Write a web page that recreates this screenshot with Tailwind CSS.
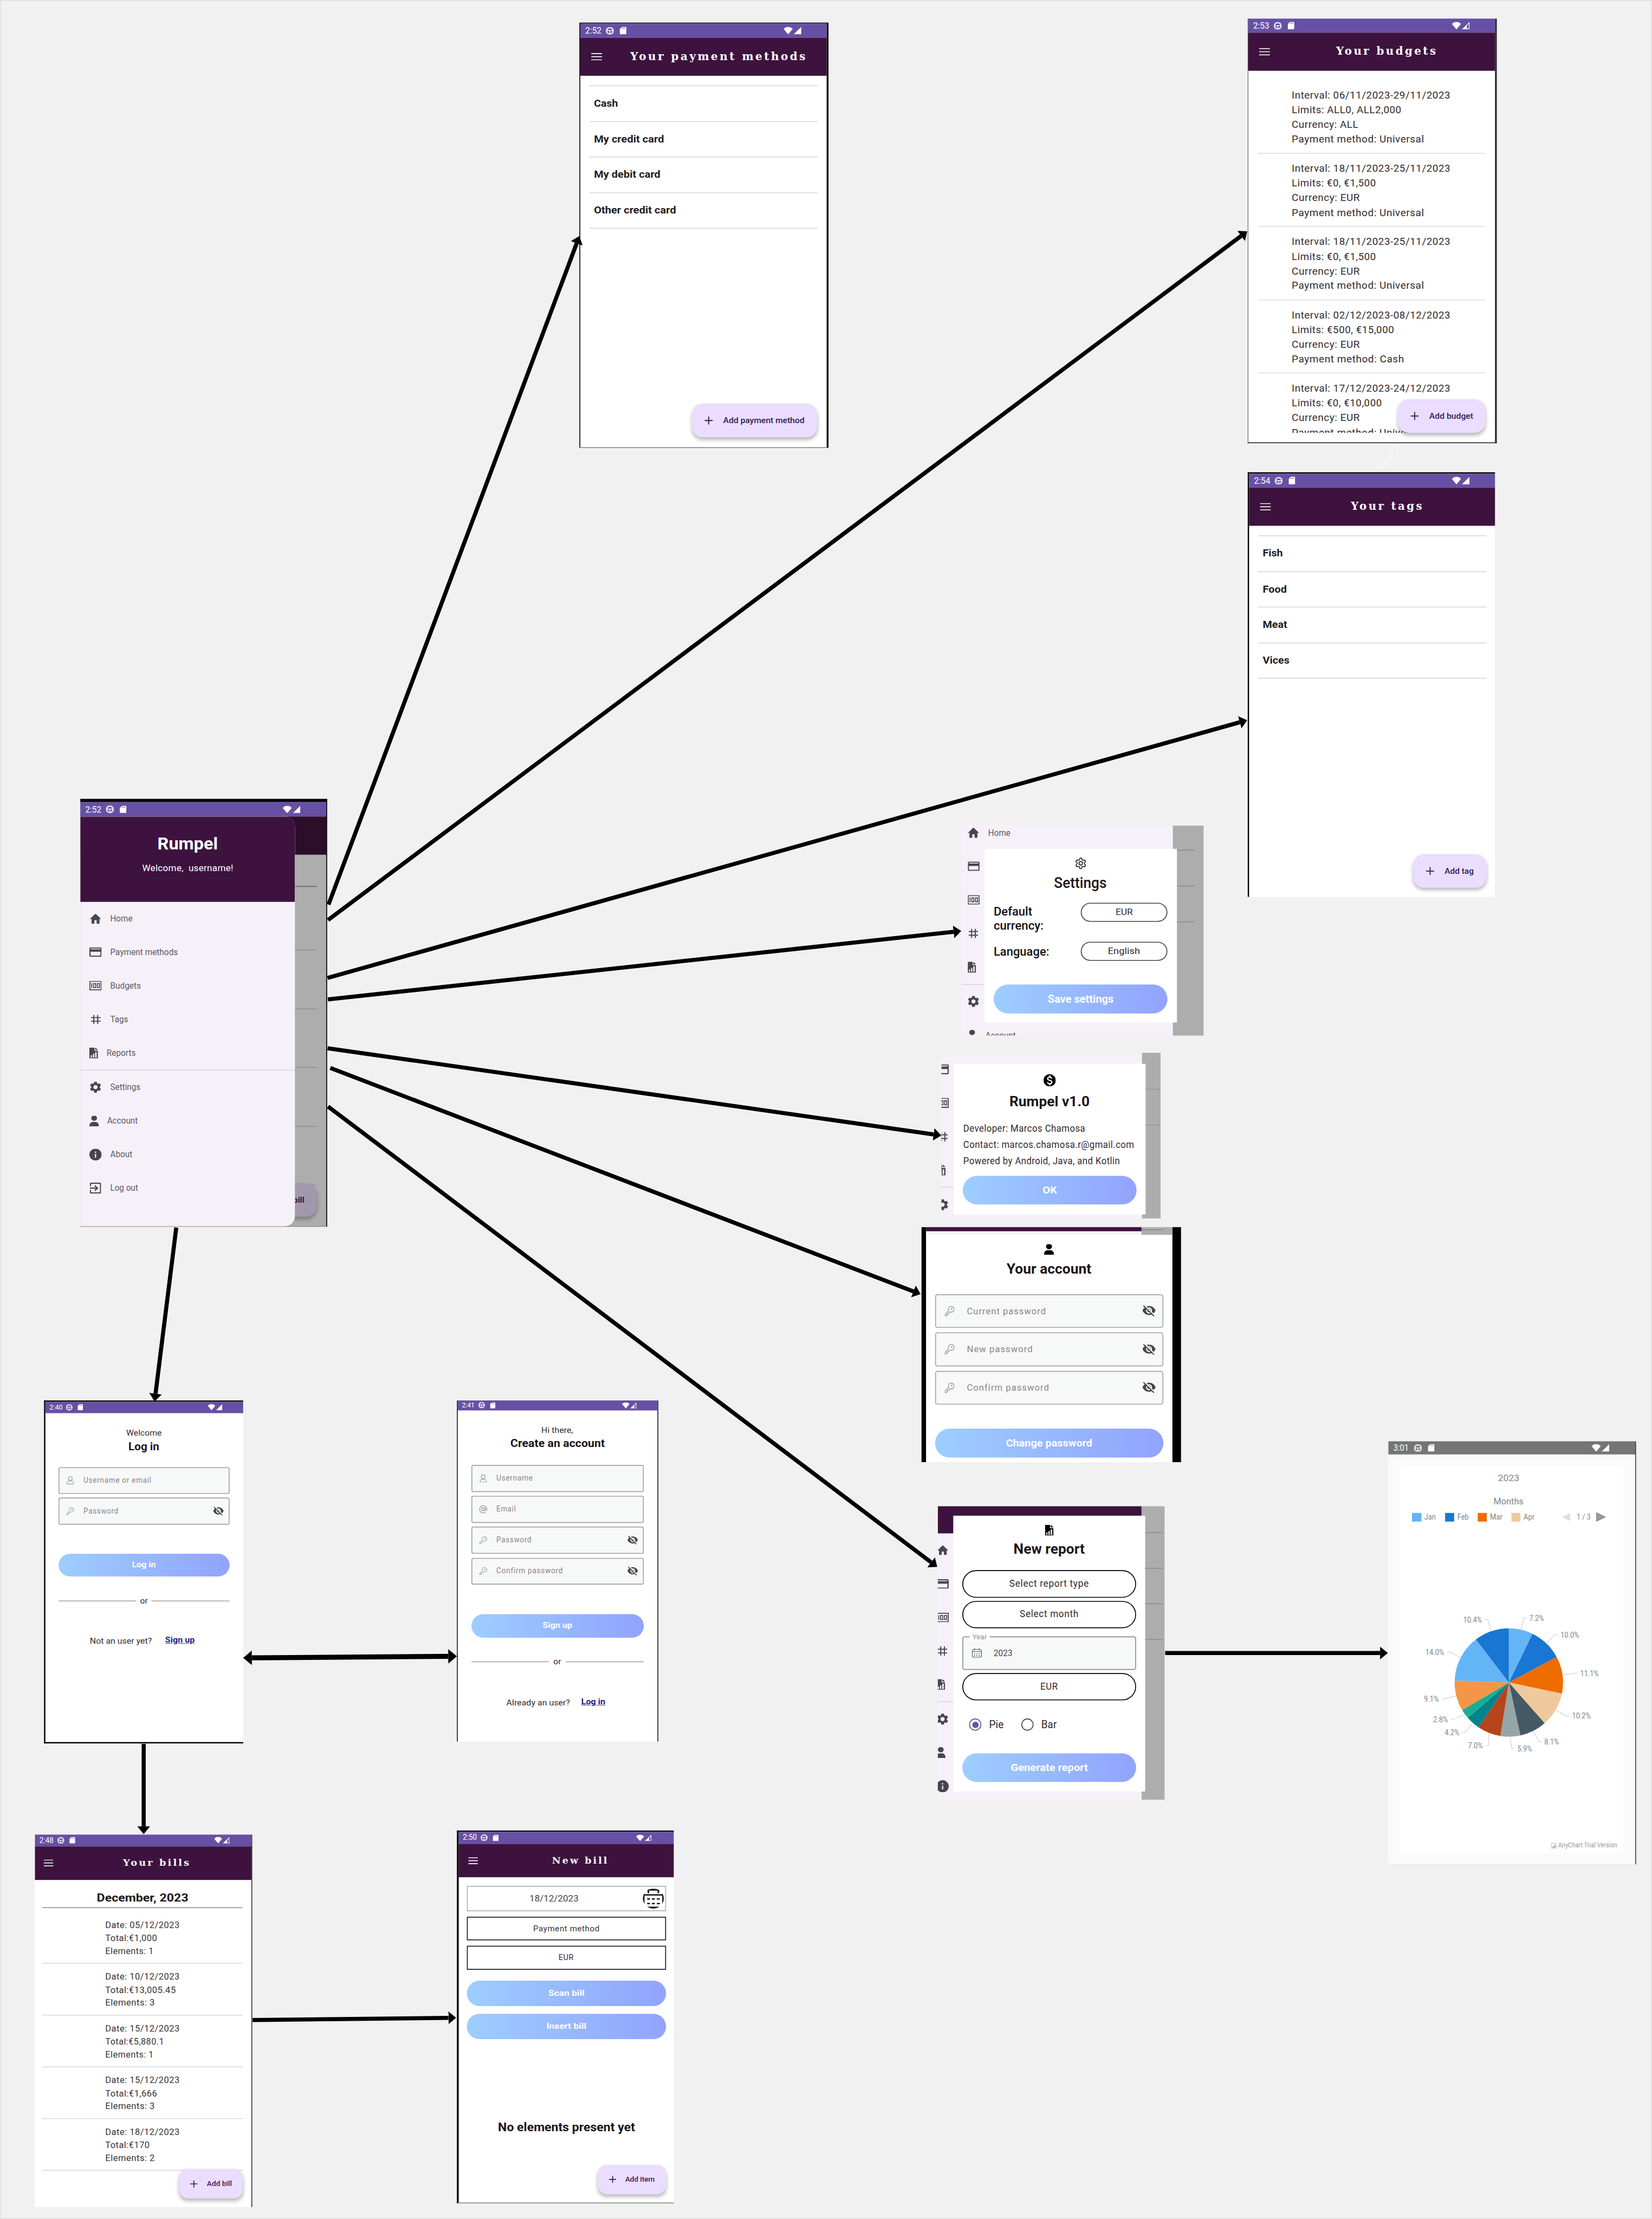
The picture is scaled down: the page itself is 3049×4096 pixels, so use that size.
<!DOCTYPE html>
<html lang="en">
<head>
<meta charset="utf-8">
<title>Rumpel screen flow</title>
<script src="https://cdn.jsdelivr.net/npm/@tailwindcss/browser@4"></script>
</head>
<body class="bg-[#f1f1f1] overflow-hidden">
<svg class="absolute size-0">
  <symbol id="home" viewBox="2 3 20 17" preserveAspectRatio="none"><path fill="currentColor" d="M10 20v-6h4v6h5v-8h3L12 3 2 12h3v8z"/></symbol>
  <symbol id="card" viewBox="2 4 20 16" preserveAspectRatio="none"><path fill="currentColor" d="M20 4H4c-1.11 0-1.99.89-1.99 2L2 18c0 1.11.89 2 2 2h16c1.11 0 2-.89 2-2V6c0-1.11-.89-2-2-2zm0 14H4v-6.500h16v6.500zm0-10.500H4V6h16v1.500z"/></symbol>
  <symbol id="money" viewBox="2 4 20 16" preserveAspectRatio="none"><path fill="currentColor" fill-rule="evenodd" d="M2 4h20v16H2zM3.600 5.600v12.800h16.800V5.600zM5 8h1.500v8H5zM8 8h5v8H8zm1.500 1.600v4.800h2V9.600zM14.300 8h5v8h-5zm1.500 1.600v4.800h2V9.600z"/></symbol>
  <symbol id="hash" viewBox="4 4 16 16" preserveAspectRatio="none"><path fill="currentColor" fill-rule="evenodd" d="M20 9.800V8h-4V4h-1.800v4h-4.400V4H8v4H4v1.800h4v4.400H4V16h4v4h1.800v-4h4.400v4H16v-4h4v-1.800h-4V9.800zm-5.800 4.400H9.800V9.800h4.400z"/></symbol>
  <symbol id="report" viewBox="0 0 18 24" preserveAspectRatio="none"><path fill="currentColor" fill-rule="evenodd" d="M1 0h9.800v7.500H18V23a1 1 0 0 1-1 1H1a1 1 0 0 1-1-1V1a1 1 0 0 1 1-1zM2.700 17v5h2.600v-5zM7.300 14v8h2.800v-8zM12 10.500V22h3.200V10.500zM12.200 0 18 5.600h-5.800z"/></symbol>
  <symbol id="gear" viewBox="2.200 2 19.600 20" preserveAspectRatio="none"><path fill="currentColor" d="M19.140 12.940c.04-.3.06-.61.06-.94 0-.32-.02-.64-.07-.94l2.030-1.580c.18-.14.23-.41.12-.61l-1.920-3.320c-.12-.22-.37-.29-.59-.22l-2.390.96c-.5-.38-1.030-.7-1.620-.94l-.36-2.540c-.04-.24-.24-.41-.48-.41h-3.840c-.24 0-.43.17-.47.41l-.36 2.540c-.59.24-1.130.57-1.620.94l-2.390-.96c-.22-.08-.47 0-.59.22L2.740 8.870c-.12.21-.08.47.12.61l2.030 1.580c-.05.3-.09.63-.09.94s.02.64.07.94l-2.030 1.580c-.18.14-.23.41-.12.61l1.920 3.320c.12.22.37.29.59.22l2.390-.96c.5.38 1.030.7 1.620.94l.36 2.540c.05.24.24.41.48.41h3.840c.24 0 .44-.17.47-.41l.36-2.540c.59-.24 1.130-.56 1.620-.94l2.390.96c.22.08.47 0 .59-.22l1.920-3.320c.12-.22.07-.47-.12-.61l-2.010-1.580zM12 15.600c-1.980 0-3.600-1.620-3.600-3.600s1.620-3.600 3.600-3.600 3.600 1.620 3.600 3.600-1.620 3.600-3.600 3.600z"/></symbol>
  <symbol id="cog" viewBox="1.500 1 21 22" preserveAspectRatio="none"><g fill="none" stroke="currentColor" stroke-width="1.700"><path d="M12.220 2h-.44a2 2 0 0 0-2 2v.18a2 2 0 0 1-1 1.730l-.43.25a2 2 0 0 1-2 0l-.15-.08a2 2 0 0 0-2.730.73l-.22.38a2 2 0 0 0 .73 2.730l.15.1a2 2 0 0 1 1 1.720v.51a2 2 0 0 1-1 1.740l-.15.09a2 2 0 0 0-.73 2.730l.22.38a2 2 0 0 0 2.730.73l.15-.08a2 2 0 0 1 2 0l.43.25a2 2 0 0 1 1 1.730V20a2 2 0 0 0 2 2h.44a2 2 0 0 0 2-2v-.18a2 2 0 0 1 1-1.730l.43-.25a2 2 0 0 1 2 0l.15.08a2 2 0 0 0 2.730-.73l.22-.39a2 2 0 0 0-.73-2.730l-.15-.08a2 2 0 0 1-1-1.740v-.5a2 2 0 0 1 1-1.740l.15-.09a2 2 0 0 0 .73-2.730l-.22-.38a2 2 0 0 0-2.730-.73l-.15.08a2 2 0 0 1-2 0l-.43-.25a2 2 0 0 1-1-1.730V4a2 2 0 0 0-2-2z"/><circle cx="12" cy="12" r="3.300"/></g></symbol>
  <symbol id="person" viewBox="0 0 20 24" preserveAspectRatio="none"><path fill="currentColor" d="M10 0a6 5.800 0 0 1 0 11.800A6 5.800 0 0 1 10 0zM0 23c0-6 3.500-9 7.500-9h5c4 0 7.500 3 7.500 9 0 .6-.4 1-1 1H1c-.6 0-1-.4-1-1z"/></symbol>
  <symbol id="user" viewBox="0 0 20 24" preserveAspectRatio="none"><path fill="none" stroke="currentColor" stroke-width="1.600" d="M10 1a5.300 5.600 0 0 1 0 11.200A5.300 5.600 0 0 1 10 1zM1 21.500c0-4 2.600-7.500 6-7.500 1 .8 5 .8 6 0 3.400 0 6 3.500 6 7.500 0 .9-.6 1.500-1.400 1.500H2.400C1.600 23 1 22.400 1 21.500z"/></symbol>
  <symbol id="info" viewBox="2 2 20 20" preserveAspectRatio="none"><path fill="currentColor" d="M12 2C6.480 2 2 6.480 2 12s4.480 10 10 10 10-4.480 10-10S17.520 2 12 2zm1 15h-2v-6h2v6zm0-8h-2V7h2v2z"/></symbol>
  <symbol id="exit" viewBox="3 3 18 18" preserveAspectRatio="none"><path fill="currentColor" d="M10.090 15.590L11.500 17l5-5-5-5-1.410 1.410L12.670 11H3v2h9.670l-2.580 2.590zM19 3H5c-1.110 0-2 .9-2 2v4h2V5h14v14H5v-4H3v4c0 1.100.89 2 2 2h14c1.100 0 2-.9 2-2V5c0-1.100-.9-2-2-2z"/></symbol>
  <symbol id="dollar" viewBox="2 2 20 20" preserveAspectRatio="none"><path fill="currentColor" d="M12 2C6.480 2 2 6.480 2 12s4.480 10 10 10 10-4.480 10-10S17.520 2 12 2zm1.410 16.090V20h-2.670v-1.930c-1.710-.36-3.160-1.460-3.270-3.400h1.960c.1 1.050.82 1.870 2.650 1.870 1.960 0 2.400-.98 2.400-1.590 0-.83-.44-1.610-2.670-2.140-2.480-.6-4.180-1.620-4.180-3.670 0-1.720 1.390-2.840 3.110-3.210V4h2.670v1.950c1.860.45 2.790 1.860 2.850 3.390H14.300c-.05-1.110-.64-1.870-2.220-1.870-1.500 0-2.400.68-2.400 1.640 0 .84.65 1.390 2.670 1.910s4.180 1.390 4.180 3.910c-.01 1.830-1.380 2.830-3.120 3.160z"/></symbol>
  <symbol id="key" viewBox="0 0 24 24" preserveAspectRatio="none"><path fill="none" stroke="currentColor" stroke-width="1.500" stroke-linejoin="round" d="M15.500 1.500c4 0 7.500 2.500 7.500 6.200s-3.200 6.800-7.200 6.800c-1.200 0-2-.2-3-.6l-2.300 2.600H8.300v2.300H6v2.300l-1.600 1.400H1v-3.200l8.700-8.500c-.4-1-.6-2-.6-3 0-3.500 2.800-6.300 6.400-6.300z"/><circle cx="17" cy="7" r="1.600" fill="currentColor"/></symbol>
  <symbol id="eye" viewBox="1 3 22 19" preserveAspectRatio="none"><path fill="currentColor" d="M12 7c2.760 0 5 2.240 5 5 0 .65-.13 1.260-.36 1.830l2.920 2.920c1.510-1.260 2.700-2.890 3.430-4.750-1.730-4.390-6-7.500-11-7.500-1.400 0-2.740.25-3.980.7l2.160 2.160C10.740 7.130 11.350 7 12 7zM2 4.270l2.280 2.280.46.46C3.080 8.300 1.780 10.020 1 12c1.730 4.390 6 7.500 11 7.500 1.550 0 3.030-.3 4.380-.84l.42.42L19.730 22 21 20.730 3.270 3 2 4.270zM7.530 9.800l1.550 1.550c-.05.21-.08.43-.08.65 0 1.660 1.340 3 3 3 .22 0 .44-.03.65-.08l1.550 1.550c-.67.33-1.410.53-2.200.53-2.760 0-5-2.240-5-5 0-.79.2-1.530.53-2.200zm4.310-.78l3.150 3.150.02-.16c0-1.660-1.340-3-3-3l-.17.01z"/></symbol>
  <symbol id="at" viewBox="1 1 22 22" preserveAspectRatio="none"><g fill="none" stroke="currentColor" stroke-width="1.700"><circle cx="12" cy="12" r="4.300"/><path d="M16.300 8v5a3 3 0 0 0 5.700 0v-1a10 10 0 1 0-4 8"/></g></symbol>
  <symbol id="cal" viewBox="0 0 24 24" preserveAspectRatio="none"><g fill="none" stroke="currentColor" stroke-width="1.600"><rect x="1" y="3" width="22" height="20" rx="4"/><path d="M1 8.500h22M6.500 0v5M17.500 0v5"/><path stroke-dasharray="3 2.500" d="M5 14h15M5 18.500h15"/></g></symbol>
  <clipPath id="disc"><ellipse cx="23" cy="22" rx="23" ry="22"/></clipPath>
  <symbol id="calbig" viewBox="0 0 46 44" preserveAspectRatio="none"><g clip-path="url(#disc)" fill="none" stroke="currentColor"><rect x="1.500" y="2.500" width="43" height="39.500" rx="6" stroke-width="4"/><path stroke-width="3" d="M0 14h46"/><path stroke-width="3.500" d="M12 0v10M34 0v10"/><path stroke-width="3" stroke-linecap="round" d="M10.500 23h4M21 23h4M32 23h4M10.500 33h4M21 33h4M32 33h4"/></g></symbol>
  <symbol id="snap" viewBox="0 0 20 20" preserveAspectRatio="none"><g fill="none" stroke="currentColor"><circle cx="10" cy="10" r="9" stroke-width="2" stroke-dasharray="1.700 1.130"/><circle cx="10" cy="10" r="7.200" stroke-width="1.900"/><path stroke-width="1.800" d="M3 9.500h14M10 10v7"/></g></symbol>
  <symbol id="sd" viewBox="4 2 16 20" preserveAspectRatio="none"><path fill="currentColor" fill-rule="evenodd" d="M18 2h-8L4 8v12c0 1.100.9 2 2 2h12c1.100 0 2-.9 2-2V4c0-1.100-.9-2-2-2zM9.500 4.500v3h1.500v-3zm3 0v3H14v-3zm3 0v3H17v-3z"/></symbol>
  <symbol id="wifi" viewBox="0 0 20 17" preserveAspectRatio="none"><path fill="currentColor" d="M10 17 0 4.800C6 -1.600 14 -1.600 20 4.800z"/></symbol>
  <symbol id="sig" viewBox="0 0 20 20" preserveAspectRatio="none"><path fill="currentColor" d="M0 20 20 0v20z"/></symbol>
  <symbol id="sighollow" viewBox="0 0 20 20" preserveAspectRatio="none"><path fill="currentColor" fill-rule="evenodd" d="M0 20 20 0v20zM13 9.500V18h4.800V5z"/></symbol>
  <symbol id="plus" viewBox="0 0 18 18" preserveAspectRatio="none"><path fill="currentColor" d="M7.900 0h2.200v7.900H18v2.200h-7.900V18H7.900v-7.900H0V7.900h7.900z"/></symbol>
  <symbol id="menu" viewBox="0 0 24 16" preserveAspectRatio="none"><path fill="currentColor" d="M0 0h24v2H0zM0 7h24v2H0zM0 14h24v2H0z"/></symbol>
</svg>

<div class="w-[3049px] h-[4096px] overflow-hidden">
  <main id="board" class="relative w-[3641px] h-[4891px] origin-top-left scale-[0.8374] bg-[#f1f1f1] outline-2 -outline-offset-2 outline-[#e0e0e0] font-['Roboto',sans-serif] text-[#1d1b20] leading-none"></main>
</div>

<script>
// Text run fitted to a fixed width.
const T = (s, w, c = '', o = 'origin-left') => `<span data-w="${w}" class="inline-block whitespace-pre ${c} ${o}">${s}</span>`;
const C = (s, w, c = '') => T(s, w, c, 'origin-center');
const I = (n, c) => `<svg class="shrink-0 ${c}"><use href="#${n}"/></svg>`;

const status = (time, w, c, sig = 'sig') => `
  <div class="flex items-center shrink-0 text-white pl-[.6em] pr-[2.95em] ${c}">
    ${T(time, w)}${I('snap', 'ml-[.42em] w-[.97em] h-[.94em]')}${I('sd', 'ml-[.68em] w-[.77em] h-[.88em]')}
    ${I('wifi', 'ml-auto w-[1.06em] h-[.88em]')}${I(sig, 'ml-[.1em] w-[.9em] h-[.88em]')}
  </div>`;
const bar = (title, w, c = 'h-[84px] pl-[24px]', t = 'text-[23.5px] tracking-[4px]', m = 'w-[24px] h-[16px]') => `
  <div class="flex items-center shrink-0 bg-[#3d123e] text-white ${c}">
    ${I('menu', m)}<div class="flex-1 text-center pl-[20px] font-bold font-['DejaVu_Serif',serif] ${t}">${C(title, w + 4)}</div>
  </div>`;
const fab = (label, w, c, t = 'text-[18.5px] h-[74px] pl-[28px] rounded-[24px]', i = 'w-[18px] h-[18px] mr-[23px]') => `
  <div class="absolute flex items-center bg-[#eaddff] text-[#331a54] font-medium shadow-[0_5px_9px_rgba(0,0,0,.28)] ${t} ${c}">
    ${I('plus', i)}${T(label, w)}</div>`;
const cta = (label, w, c) => `<div class="flex items-center justify-center shrink-0 rounded-full bg-linear-to-r/srgb from-[#9dceff] to-[#92a3fd] text-white font-bold ${c}">${C(label, w)}</div>`;
const field = (icon, label, w, eye, c, ic, ec) => `
  <div class="flex items-center shrink-0 bg-[#f7f9f8] border-2 border-[#a5a2aa] text-[#8d8389] ${c}">
    ${I(icon, ic)}${T(label, w)}${eye ? I('eye', 'ml-auto text-[#49454f] ' + ec) : ''}</div>`;
const sideRow = (icon, c) => `<div class="flex items-center h-[74px] shrink-0">${I(icon, c)}</div>`;

const listRows = rows => rows.map(([s, w]) => `<div class="flex items-center h-[78.5px] border-b-2 border-[#d9d8dd] pl-[10px] text-[22px] font-bold">${T(s, w)}</div>`).join('');

const payments = `
<section class="absolute left-[1277px] top-[50px] w-[549px] h-[937px] flex flex-col bg-white border-l-2 border-r-4 border-t-2 border-b border-black">
  ${status('2:52', 35.5, 'h-[31px] bg-[#6750a4] text-[19px]')}
  ${bar('Your payment methods', 386)}
  <div class="mt-[21px] mx-[20px] border-t-2 border-[#d9d8dd]">
    ${listRows([['Cash', 53], ['My credit card', 154.6], ['My debit card', 146.5], ['Other credit card', 181]])}
  </div>
  ${fab('Add payment method', 179, 'right-[21px] bottom-[22px] w-[276px]')}
</section>`;

const budgetRow = r => `<div class="flex flex-col h-[161.6px] shrink-0 border-b-2 border-[#e0e0e4] pl-[75px] pt-[17px] text-[22px] leading-[32.4px] tracking-[.6px] text-[#322b2f]">
  ${r.map(([s, w]) => `<div>${T(s, w)}</div>`).join('')}</div>`;
const budgets = `
<section class="absolute left-[2750px] top-[41px] w-[549px] h-[936px] flex flex-col bg-white border-l border-r-4 border-b-2 border-[#2a2a2a]">
  ${status('2:53', 35.5, 'h-[31px] bg-[#6750a4] text-[19px]', 'sighollow')}
  ${bar('Your budgets', 220)}
  <div class="mx-[21px] pt-[21px] h-[798px] overflow-hidden">
    ${budgetRow([['Interval: 06/11/2023-29/11/2023', 350], ['Limits: ALL0, ALL2,000', 242], ['Currency: ALL', 147], ['Payment method: Universal', 292]])}
    ${budgetRow([['Interval: 18/11/2023-25/11/2023', 350], ['Limits: €0, €1,500', 186], ['Currency: EUR', 150.5], ['Payment method: Universal', 292]])}
    ${budgetRow([['Interval: 18/11/2023-25/11/2023', 350], ['Limits: €0, €1,500', 186], ['Currency: EUR', 150.5], ['Payment method: Universal', 292]])}
    ${budgetRow([['Interval: 02/12/2023-08/12/2023', 350], ['Limits: €500, €15,000', 226], ['Currency: EUR', 150.5], ['Payment method: Cash', 248]])}
    ${budgetRow([['Interval: 17/12/2023-24/12/2023', 350], ['Limits: €0, €10,000', 199], ['Currency: EUR', 150.5], ['Payment method: Universal', 292]])}
  </div>
  ${fab('Add budget', 97, 'right-[21px] bottom-[21px] w-[193px]')}
</section>`;

const tags = `
<section class="absolute left-[2750px] top-[1041px] w-[545px] h-[936px] flex flex-col bg-white border-l-3 border-t-3 border-black">
  ${status('2:54', 35.5, 'h-[31px] bg-[#6750a4] text-[19px]')}
  ${bar('Your tags', 157)}
  <div class="mt-[21px] ml-[20px] mr-[19px] border-t-2 border-[#d9d8dd]">
    ${listRows([['Fish', 44.4], ['Food', 53], ['Meat', 54], ['Vices', 59]])}
  </div>
  ${fab('Add tag', 64, 'right-[19px] bottom-[20px] w-[161px]')}
</section>`;

const item = (icon, label, w, ic) => `<div class="flex items-center h-[74px] shrink-0 text-[#5d5963] text-[19px]">
  ${I(icon, 'text-[#49454f] ' + ic)}${T(label, w)}</div>`;
const drawer = `
<section class="absolute left-[177px] top-[1761px] w-[543.500px] h-[943px] flex flex-col bg-[#adadad] border-r-2 border-t-7 border-b border-black border-b-[#777]">
  ${status('2:52', 35.5, 'h-[32px] bg-[#6750a4] text-[19px]')}
  <div class="h-[84px] shrink-0 bg-[#2c0d2a]"></div>
  <div class="ml-[440px] mr-[21px] flex flex-col text-[#919096]">
    <div class="h-[71px] border-b-2 border-[#686464]"></div>
    <div class="h-[140px] border-b-2"></div><div class="h-[129.500px] border-b-2"></div>
    <div class="h-[129.500px] border-b-2"></div><div class="h-[129.500px] border-b-2"></div><div class="h-[129.500px] border-b-2"></div>
  </div>
  <div class="absolute right-[21px] bottom-[21px] h-[74px] w-[161px] pl-[70px] rounded-[24px] flex items-center bg-[#a197ae] text-[#2c1a44] text-[18.5px] font-bold shadow-[0_5px_9px_rgba(0,0,0,.28)]">${T('Add bill', 64)}</div>
  <div class="absolute left-0 top-[32px] bottom-0 w-[473px] rounded-r-[22px] overflow-hidden bg-[#f6f1f9] flex flex-col">
    <div class="h-[187.500px] shrink-0 bg-[#3d123e] text-white flex flex-col items-center">
      <div class="mt-[42px] text-[37px] font-bold">${C('Rumpel', 133)}</div>
      <div class="mt-[25px] text-[19.5px] tracking-[.3px]">${C('Welcome,&nbsp; username!', 201)}</div>
    </div>
    <div class="flex flex-col pl-[20px]">
      ${item('home', 'Home', 49, 'w-[25px] h-[22px] ml-[1px] mr-[20px]')}
      ${item('card', 'Payment methods', 149, 'w-[27px] h-[21px] mr-[19px]')}
      ${item('money', 'Budgets', 67.4, 'w-[27px] h-[21px] mr-[19px]')}
      ${item('hash', 'Tags', 39.4, 'w-[22px] h-[20px] ml-[3px] mr-[21px]')}
      ${item('report', 'Reports', 64, 'w-[19px] h-[24px] mr-[19px]')}
    </div>
    <div class="h-[2px] shrink-0 bg-[#dbd5de]"></div>
    <div class="flex flex-col pl-[20px]">
      ${item('gear', 'Settings', 66.6, 'w-[25px] h-[25px] ml-[1px] mr-[20px]')}
      ${item('person', 'Account', 67.7, 'w-[21px] h-[24px] mr-[18px]')}
      ${item('info', 'About', 48.6, 'w-[27px] h-[26px] mr-[19px]')}
      ${item('exit', 'Log out', 61.2, 'w-[25px] h-[24px] ml-[1px] mr-[20px]')}
    </div>
  </div>
</section>`;

const settings = `
<section class="absolute left-[2120px] top-[1820px] w-[533px] h-[463px] overflow-hidden bg-[#f6f1f9] flex justify-between">
  <div class="flex flex-col w-[50px] text-[#49454f] -mt-[21.500px]">
    <div class="flex items-center h-[74px] shrink-0 pl-[13px] text-[20px]">${I('home', 'w-[25px] h-[23px] mr-[20px]')}${T('Home', 49, 'text-[#5d5963]')}</div>
    ${sideRow('card', 'w-[26px] h-[21px] ml-[13px]')}${sideRow('money', 'w-[26px] h-[21px] ml-[13px]')}
    ${sideRow('hash', 'w-[21px] h-[21px] ml-[15px]')}${sideRow('report', 'w-[18px] h-[24px] ml-[13px]')}
    <div class="h-[2px] shrink-0 bg-[#dbd5de]"></div>
    ${sideRow('gear', 'w-[25px] h-[25px] ml-[13px]')}
    <div class="flex items-center h-[74px] shrink-0 pl-[12px] text-[20px]">${I('person', 'w-[21px] h-[24px] mr-[19px]')}${T('Account', 66.6, 'text-[#5d5963]')}</div>
  </div>
  <div class="w-[68px] bg-[#adadad] pt-[53px] pr-[21px] flex flex-col gap-[77px]">
    <div class="h-[2px] bg-[#8e8d93]"></div><div class="h-[2px] bg-[#8e8d93]"></div><div class="h-[2px] bg-[#8e8d93]"></div>
  </div>
  <div class="absolute left-[49.500px] top-[50.500px] w-[424px] h-[383.500px] bg-white flex flex-col px-[20.500px]">
    ${I('cog', 'mt-[19px] self-center w-[24px] h-[26px] text-[#222]')}
    <div class="mt-[13px] text-center text-[33px] font-medium text-[#1d1517]">${C('Settings', 116)}</div>
    <div class="mt-[28px] flex justify-between text-[#111]">
      <div class="mt-[4px] text-[26px] leading-[31px] font-medium flex flex-col items-start">${T('Default', 85)}${T('currency:', 110)}</div>
      <div class="w-[191px] h-[42px] rounded-full border-2 border-[#444] flex items-center justify-center text-[20.500px] text-[#322b2f]">${C('EUR', 38)}</div>
    </div>
    <div class="mt-[20px] flex justify-between items-center text-[#111]">
      <div class="text-[26px] font-medium">${T('Language:', 122.5)}</div>
      <div class="w-[191px] h-[42px] rounded-full border-2 border-[#444] flex items-center justify-center text-[20.500px] text-[#322b2f]">${C('English', 71)}</div>
    </div>
    ${cta('Save settings', 145, 'mt-[52px] h-[64px] text-[24px]')}
  </div>
</section>`;

const about = `
<section class="absolute left-[2075px] top-[2321px] w-[483px] h-[364.500px] overflow-hidden bg-[#f6f1f9] flex justify-between">
  <div class="flex flex-col w-[30px] text-[#49454f] -mt-[1px]">
    ${sideRow('card', 'w-[26px] h-[22px] -ml-[10px]')}${sideRow('money', 'w-[26px] h-[22px] -ml-[10px]')}
    ${sideRow('hash', 'w-[21px] h-[21px] -ml-[7px]')}${sideRow('report', 'w-[19px] h-[24px] -ml-[10px]')}
    <div class="h-[2px] shrink-0 bg-[#dbd5de]"></div>${sideRow('gear', 'w-[25px] h-[25px] -ml-[10px]')}
  </div>
  <div class="w-[41px] bg-[#adadad] flex flex-col gap-[77px]">
    <div class="h-[2px] bg-[#a09fa3]"></div><div class="h-[2px] bg-[#99989c]"></div><div class="h-[2px] bg-[#99989c]"></div>
  </div>
  <div class="absolute left-[26.500px] top-[23.500px] w-[423.500px] h-[332px] bg-white flex flex-col px-[20px]">
    ${I('dollar', 'mt-[23px] self-center w-[27px] h-[27px] text-black')}
    <div class="mt-[17px] text-center text-[31px] font-bold text-[#1d1517]">${C('Rumpel v1.0', 177)}</div>
    <div class="mt-[28px] flex flex-col pl-[1.500px] text-[21px] leading-[35.500px] tracking-[.5px] text-[#322b2f]">
      <div>${T('Developer: Marcos Chamosa', 269)}</div><div>${T('Contact: marcos.chamosa.r@gmail.com', 377)}</div><div>${T('Powered by Android, Java, and Kotlin', 345.6)}</div>
    </div>
    ${cta('OK', 31.6, 'mt-[15px] h-[63px] text-[22px]')}
  </div>
</section>`;

const pwField = (s, w) => field('key', s, w, true, 'h-[74.500px] rounded-[5px] pl-[19px] pr-[15px] text-[20.500px] tracking-[1.200px]', 'w-[22px] h-[24px] mr-[27px]', 'w-[29px] h-[25px]');
const account = `
<section class="absolute left-[2030.500px] top-[2704.500px] w-[572.500px] h-[518px] bg-white border-l-10 border-r-19 border-black flex flex-col">
  <div class="flex h-[17px] shrink-0"><div class="flex-1 bg-[#f6f1f9] border-t-9 border-[#3d123e]"></div><div class="w-[68px] bg-[#adadad] pt-[5px] pr-[21px]"><div class="h-[2px] bg-[#8e8d93]"></div></div></div>
  <div class="flex flex-col px-[20px]">
    ${I('person', 'mt-[20.500px] self-center w-[22px] h-[24px] text-black')}
    <div class="mt-[15px] text-center text-[31px] font-bold text-[#1d1517]">${C('Your account', 186.6)}</div>
    <div class="mt-[40.500px] flex flex-col gap-[10px]">${pwField('Current password', 175)}${pwField('New password', 146)}${pwField('Confirm password', 182)}</div>
    ${cta('Change password', 190.6, 'mt-[53px] h-[63.500px] text-[22px]')}
  </div>
</section>`;

const loginField = (icon, s, w, eye) => field(icon, s, w, eye, 'h-[59.700px] rounded-[4px] pl-[15px] pr-[11px] text-[16.500px] tracking-[.8px]',
  icon === 'user' ? 'w-[16px] h-[18px] ml-px mr-[21px]' : 'w-[18px] h-[18px] mr-[20px]', 'w-[23px] h-[20px]');
const orLine = `<div class="flex items-center justify-between text-[18px] text-[#322b2f]"><div class="w-[171.500px] h-[2px] bg-[#b0a6ab]"></div>${C('or', 17)}<div class="w-[171.500px] h-[2px] bg-[#b0a6ab]"></div></div>`;
const login = `
<section class="absolute left-[96.500px] top-[3086.500px] w-[439px] h-[756px] bg-white border-l-3 border-t-3 border-b-3 border-black flex flex-col">
  ${status('2:40', 29, 'h-[25.500px] bg-[#6750a4] text-[15.500px]')}
  <div class="flex flex-col ml-[29px] mr-[30px]">
    <div class="mt-[36px] text-center text-[17.500px] text-[#322b2f]">${C('Welcome', 78)}</div>
    <div class="mt-[8px] text-center text-[24px] font-bold text-[#1d1517]">${C('Log in', 68)}</div>
    <div class="mt-[33px] flex flex-col gap-[8px]">${loginField('user', 'Username or email', 150)}${loginField('key', 'Password', 77.5, true)}</div>
    ${cta('Log in', 52, 'mt-[64px] h-[50px] text-[17.500px]')}
    <div class="mt-[45px]">${orLine}</div>
    <div class="mt-[68px] flex pl-[69px] text-[18px] text-[#322b2f]"><div class="w-[166px] pt-[2px]">${T('Not an user yet?', 136.7)}</div>${T('Sign up', 65, 'font-bold text-[#201c84] underline')}</div>
  </div>
</section>`;

const signup = `
<section class="absolute left-[1006.500px] top-[3086.500px] w-[444px] h-[752.500px] bg-white border-l-2 border-r-2 border-[#222] flex flex-col">
  ${status('2:41', 28, 'h-[22.500px] bg-[#6750a4] text-[15.500px]', 'sighollow')}
  <div class="flex flex-col mx-[30px]">
    <div class="mt-[35.500px] text-center text-[17.500px] text-[#322b2f]">${C('Hi there,', 70)}</div>
    <div class="mt-[8px] text-center text-[24px] font-bold text-[#1d1517]">${C('Create an account', 208)}</div>
    <div class="mt-[35px] flex flex-col gap-[8.500px]">${loginField('user', 'Username', 80.7)}${loginField('at', 'Email', 43.7)}${loginField('key', 'Password', 78, true)}${loginField('key', 'Confirm password', 147, true)}</div>
    ${cta('Sign up', 65, 'mt-[65px] h-[51.500px] text-[17.500px]')}
    <div class="mt-[44.500px]">${orLine}</div>
    <div class="mt-[70px] flex pl-[77px] text-[18px] text-[#322b2f]"><div class="w-[165.500px] pt-[2px]">${T('Already an user?', 140.3)}</div>${T('Log in', 53, 'font-bold text-[#201c84] underline')}</div>
  </div>
</section>`;

const pill = (s, w, c) => `<div class="shrink-0 rounded-full border-2 border-black flex items-center justify-center text-[21px] tracking-[.8px] text-[#322b2f] ${c}">${C(s, w)}</div>`;
const report = `
<section class="absolute left-[2066.500px] top-[3320px] w-[500.500px] h-[647px] overflow-hidden bg-[#f6f1f9] flex justify-between">
  <div class="flex-1 flex flex-col text-[#49454f]">
    <div class="h-[60px] shrink-0 bg-[#3d123e]"></div>
    ${sideRow('home', 'w-[24px] h-[22px] -ml-[1px]')}${sideRow('card', 'w-[27px] h-[21px] -ml-[3px]')}${sideRow('money', 'w-[27px] h-[21px] -ml-[3px]')}
    ${sideRow('hash', 'w-[21px] h-[21px]')}${sideRow('report', 'w-[19px] h-[24px] -ml-[3px]')}
    <div class="h-[2px] shrink-0 bg-[#dbd5de]"></div>
    ${sideRow('gear', 'w-[25px] h-[25px] -ml-[2px]')}${sideRow('person', 'w-[21px] h-[24px] -ml-[4px]')}${sideRow('info', 'w-[27px] h-[27px] -ml-[3px]')}
  </div>
  <div class="w-[51px] bg-[#adadad] pt-[57px] pr-[4px] flex flex-col gap-[76.500px]">
    <div class="h-[2px] bg-[#8e8d93]"></div><div class="h-[2px] bg-[#8e8d93]"></div><div class="h-[2px] bg-[#8e8d93]"></div><div class="h-[2px] bg-[#8e8d93]"></div>
  </div>
  <div class="absolute left-[34px] top-[21px] w-[423.500px] h-[607.500px] bg-white flex flex-col px-[20.500px]">
    ${I('report', 'mt-[20px] self-center w-[19px] h-[24px] text-black')}
    <div class="mt-[14px] text-center text-[31px] font-bold text-[#1d1517]">${C('New report', 157)}</div>
    ${pill('Select report type', 175.7, 'mt-[31px] h-[60.500px]')}
    ${pill('Select month', 130, 'mt-[7px] h-[60.500px]')}
    <div class="relative mt-[17.500px] h-[74px] shrink-0 border-2 border-[#8f8b94] rounded-[5px] bg-[#f7f9f8] flex items-center pl-[19px] text-[20px] text-[#4c464a]">
      <div class="absolute left-[14px] -top-[8px] w-[44px] h-[16px] bg-white flex items-center justify-center text-[16px] text-[#968c91]">${C('Year', 32)}</div>
      ${I('cal', 'w-[22px] h-[21px] mr-[26px] text-[#56525b]')}${T('2023', 41.4)}
    </div>
    ${pill('EUR', 39, 'mt-[7.500px] h-[60px]')}
    <div class="mt-[40px] pl-[15px] flex items-center text-[24px] text-[#322b2f]">
      <div class="size-[27px] rounded-full border-[2.500px] border-[#6750a4] flex items-center justify-center"><div class="size-[14px] rounded-full bg-[#6750a4]"></div></div>
      <div class="ml-[16.500px] w-[71.500px]">${T('Pie', 32)}</div>
      <div class="size-[27px] rounded-full border-[2.500px] border-[#49454f]"></div>
      <div class="ml-[16.500px]">${T('Bar', 34)}</div>
    </div>
    ${cta('Generate report', 170, 'mt-[50px] h-[63px] text-[22.500px]')}
  </div>
</section>`;

// Monthly shares: percentage, colour, connector points, label start and width.
const slices = [
  [7.2, '#64b5f6', '266.1,358.8 272.5,333.4 278.1,333.4', 284.5, 333.4, 32.5],
  [10.0, '#1976d2', '322.5,389.7 340.6,370.5 347,370.5', 353.4, 370.5, 41],
  [11.1, '#ef6c00', '359,459 385.4,455.3 390.6,455.3', 396.7, 455.3, 41],
  [10.2, '#f0c89d', '343.6,536.9 365.4,549.3 372.2,549.3', 379, 549.3, 41],
  [8.1, '#455a64', '293.9,583.3 306,606.2 312,606.2', 317.6, 606.2, 32.7],
  [5.9, '#96a6a6', '242.7,595.7 245.8,621.7 251.8,621.7', 258.2, 621.7, 32.7],
  [7.0, '#b5451b', '195.3,587.6 195,614.9 188.6,614.9', 149.4, 614.9, 32.7],
  [4.2, '#00838f', '159.2,565.4 143.4,585.8 136.6,585.8', 97.9, 585.8, 32.7],
  [2.8, '#1aae93', '141.9,545.6 117.8,556.7 111.4,556.7', 72.7, 556.7, 32.7],
  [9.1, '#f49548', '122.7,505.4 97.9,511.6 91.5,511.6', 52.3, 511.6, 32.7],
  [14.0, '#64b5f6', '133.2,420.6 109.9,408.9 103.1,408.9', 55.7, 408.9, 41.4],
  [10.4, '#1976d2', '201,361.9 192.7,337.1 185.9,337.1', 138.9, 337.1, 41.4],
];
let turn = 0;
const at = p => { const a = p / 100 * 2 * Math.PI; return `${239.5 + 119.4 * Math.sin(a)} ${475.7 - 119.4 * Math.cos(a)}`; };
const pie = slices.map(([v, col, pts, x, y, w]) => {
  const from = at(turn); turn += v;
  return `<path d="M239.5 475.7L${from}A119.4 119.4 0 0 1 ${at(turn)}z" fill="${col}"/>
    <polyline points="${pts}" fill="none" stroke="#cfd4d4" stroke-width="1.5"/>
    <text x="${x}" y="${y + 6}" textLength="${w}" lengthAdjust="spacingAndGlyphs" font-size="16.5" fill="#7c868e">${v.toFixed(1)}%</text>`;
}).join('');
const legend = (s, w, sw, c) => `<div class="flex items-center ${c}"><div class="w-[20.500px] h-[19px] mr-[6.500px] ${sw}"></div>${T(s, w)}</div>`;
const chart = `
<section class="absolute left-[3060px] top-[3177px] w-[545.500px] h-[933px] bg-[#fafafa] border-r-2 border-[#454545] border-b border-b-[#e2e2e2] flex flex-col">
  ${status('3:01', 34, 'h-[29px] bg-[#757575] text-[19px]')}
  <div class="relative mt-[26.500px] ml-[25.500px] w-[492px] h-[851px] shrink-0 bg-white text-[#7c868e] flex flex-col">
    <svg class="absolute inset-0 w-[492px] h-[851px]">${pie}</svg>
    <div class="mt-[15px] pr-[13px] text-center text-[20.500px]">${C('2023', 46.7)}</div>
    <div class="mt-[30.500px] pr-[13px] text-center text-[20.500px]">${C('Months', 66)}</div>
    <div class="mt-[15.500px] h-[19px] pl-[26.500px] flex items-center text-[17px]">
      ${legend('Jan', 25.6, 'bg-[#64b5f6]', 'w-[72.500px]')}${legend('Feb', 25, 'bg-[#1976d2]', 'w-[72px]')}${legend('Mar', 27.5, 'bg-[#ef6c00]', 'w-[74px]')}${legend('Apr', 24, 'bg-[#f0c89d]', 'w-[112.500px]')}
      <svg class="w-[18px] h-[18px]" viewBox="0 0 18 18"><path fill="#dedede" d="M0 9 18 0v18z"/></svg>
      <div class="ml-[14px] w-[43px]">${T('1 / 3', 30.5)}</div>
      <svg class="w-[21px] h-[20px]" viewBox="0 0 21 20"><path fill="#9b9b9b" stroke="#7a7a7a" stroke-width="1.500" d="M1 1 20 10 1 19z"/></svg>
    </div>
    <div class="mt-auto mb-[8px] ml-[333px] flex items-center text-[14.500px] text-[#9b9b9b]">
      <svg class="w-[13.500px] h-[13.500px] mr-[3px]" viewBox="0 0 14 14"><path fill="none" stroke="#9b9b9b" d="M.5.5h13v13H.5z"/><path fill="#9b9b9b" d="M3 8h2v4H3zM6 6h2v6H6zM9 3.500h2V12H9z"/></svg>${T('AnyChart Trial Version', 130)}
    </div>
  </div>
</section>`;

const billRow = r => `<div class="flex flex-col h-[114.100px] shrink-0 border-b-2 border-[#dcdbe2] pl-[138.500px] pt-[15.500px] text-[19px] leading-[28.500px] tracking-[.5px] text-[#3a3337]">
  ${r.map(([s, w]) => `<div>${T(s, w)}</div>`).join('')}</div>`;
const bills = `
<section class="absolute left-[77px] top-[4044px] w-[479px] h-[821px] bg-white border-r-2 border-[#333] flex flex-col">
  ${status('2:48', 31, 'h-[25.500px] bg-[#6750a4] text-[16.500px] -mr-px', 'sighollow')}
  ${bar('Your bills', 145.7, 'h-[74px] pl-[19px]', 'text-[20.500px] tracking-[3.500px]', 'w-[21.500px] h-[15px]')}
  <div class="ml-[16px] mr-[19px] flex flex-col">
    <div class="h-[62px] pt-[27px] border-b-2 border-[#9c9296] text-center text-[25px] font-bold text-[#1d1517]">${C('December, 2023', 202)}</div>
    <div class="mt-[9px]">
      ${billRow([['Date: 05/12/2023', 164.3], ['Total:€1,000', 114.7], ['Elements: 1', 107]])}
      ${billRow([['Date: 10/12/2023', 164.3], ['Total:€13,005.45', 155.7], ['Elements: 3', 109.3]])}
      ${billRow([['Date: 15/12/2023', 164.3], ['Total:€5,880.1', 130], ['Elements: 1', 107]])}
      ${billRow([['Date: 15/12/2023', 164.3], ['Total:€1,666', 114.7], ['Elements: 3', 109.3]])}
      ${billRow([['Date: 18/12/2023', 164.3], ['Total:€170', 98.3], ['Elements: 2', 109.3]])}
    </div>
  </div>
  ${fab('Add bill', 55, 'right-[19px] bottom-[19px] w-[140px]', 'text-[16px] h-[65px] pl-[24px] rounded-[20px]', 'w-[16.500px] h-[16px] mr-[20px]')}
</section>`;

const box = (s, w, c) => `<div class="shrink-0 border-2 border-[#1a1a1a] flex items-center justify-center text-[18.500px] tracking-[.6px] text-[#3a3337] ${c}">${C(s, w)}</div>`;
const newBill = `
<section class="absolute left-[1006.500px] top-[4034.500px] w-[478.500px] h-[822px] bg-white border-l-4 border-t-3 border-b-2 border-black border-b-[#888] flex flex-col">
  ${status('2:50', 31, 'h-[27px] bg-[#6750a4] text-[16.500px]', 'sighollow')}
  ${bar('New bill', 121, 'h-[73.500px] pl-[21px]', 'text-[20.500px] tracking-[3.500px]', 'w-[21.500px] h-[15px]')}
  <div class="ml-[18px] mr-[17px] flex flex-col">
    <div class="mt-[19px] h-[56px] shrink-0 border-2 border-[#b0b0b0] flex items-center pl-[136px] pr-[3px] text-[19px] text-[#4a4448]">${T('18/12/2023', 108)}${I('calbig', 'ml-auto w-[46px] h-[44px] text-[#111]')}</div>
    ${box('Payment method', 146.7, 'mt-[11.500px] h-[52.500px]')}
    ${box('EUR', 34, 'mt-[12px] h-[52.500px]')}
    ${cta('Scan bill', 80, 'mt-[24px] h-[56px] text-[18.500px]')}
    ${cta('Insert bill', 88, 'mt-[17px] h-[56px] text-[18.500px]')}
    <div class="mt-[181px] text-center text-[26px] font-bold text-[#1d1517]">${C('No elements present yet', 302)}</div>
  </div>
  ${fab('Add item', 64.7, 'right-[17px] bottom-[18px] w-[150.500px]', 'text-[16px] h-[65px] pl-[24px] rounded-[20px]', 'w-[16.500px] h-[16px] mr-[20px]')}
</section>`;

const arrows = `
<svg class="absolute inset-0 w-[3641px] h-[4891px]" viewBox="0 0 3641 4891">
  <defs>
    <marker id="head" markerUnits="userSpaceOnUse" markerWidth="18" markerHeight="28" refX="0" refY="14" orient="auto"><path d="M0 0 17 14 0 28z"/></marker>
    <marker id="big" markerUnits="userSpaceOnUse" markerWidth="20" markerHeight="32" refX="0" refY="16" orient="auto-start-reverse"><path d="M0 0 19 16 0 32z"/></marker>
  </defs>
  <path d="M3031 1031 3066 1003 3060 994 3082 981 3078 1006 3072 1006 3042 1034z" fill="none" stroke="#f9f9f9" stroke-width="2"/>
  <g stroke="#000" stroke-width="9">
    <path marker-end="url(#head)" d="M724 1994 1271 536.400"/>
    <path marker-end="url(#head)" d="M723 2028 2735.400 520.200"/>
    <path marker-end="url(#head)" d="M722 2155.600 2732.400 1592.100"/>
    <path marker-end="url(#head)" d="M722.600 2203 2101.700 2054.100"/>
    <path marker-end="url(#head)" d="M722 2310.600 2057.700 2500.600"/>
    <path marker-end="url(#head)" d="M728 2354 2013.100 2846.600"/>
    <path marker-end="url(#head)" d="M723 2439 2052.100 3443.700"/>
    <path marker-end="url(#head)" d="M388.500 2706 342.800 3072.100"/>
    <path marker-end="url(#head)" d="M316.700 3844 316.700 4026"/>
    <path marker-end="url(#head)" d="M556.700 4452.800 988.300 4448"/>
    <path marker-end="url(#head)" d="M2568 3643.700 3041.800 3643.700"/>
  </g>
  <path stroke="#000" stroke-width="11" marker-start="url(#big)" marker-end="url(#big)" d="M555 3654.300 988 3651.100"/>
</svg>`;

const board = document.getElementById('board');
board.innerHTML = payments + budgets + tags + drawer + settings + about + account + login + signup + report + chart + bills + newBill + arrows;

const fit = () => {
  const ratio = board.getBoundingClientRect().width / board.offsetWidth;
  board.querySelectorAll('[data-w]').forEach(el => {
    el.style.transform = 'none';
    el.style.transform = `scaleX(${el.dataset.w * ratio / el.getBoundingClientRect().width})`;
  });
};
fit();
document.fonts.ready.then(fit);
window.addEventListener('load', fit);
</script>
</body>
</html>
